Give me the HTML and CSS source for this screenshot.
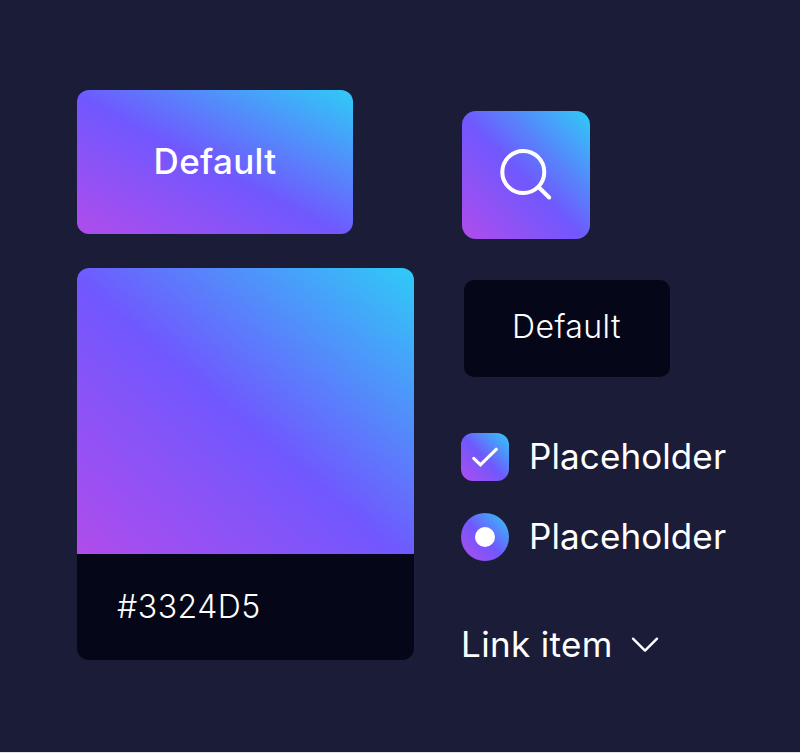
FILE: index.html
```html
<!DOCTYPE html>
<html lang="en">
<head>
<meta charset="utf-8">
<title>Components</title>
<link rel="stylesheet" href="styles.css">
</head>
<body>
<main class="board">
  <section class="column column-left">
    <button class="btn btn-primary"><span>Default</span></button>
    <article class="swatch">
      <div class="swatch-color"></div>
      <div class="swatch-label"><span>#3324D5</span></div>
    </article>
  </section>
  <section class="column column-right">
    <button class="btn-icon" aria-label="Search">
      <svg width="128" height="128" viewBox="0 0 128 128" fill="none" stroke="#fff" stroke-width="4" stroke-linecap="round"><circle cx="61.3" cy="61" r="21"/><path d="M76.5 76 87.2 86.5"/></svg>
    </button>
    <button class="btn btn-dark"><span>Default</span></button>
    <div class="option">
      <span class="checkbox"><svg width="48" height="48" viewBox="0 0 48 48" fill="none" stroke="#fff" stroke-width="3.2" stroke-linecap="round" stroke-linejoin="miter"><path d="M12.8 25.4 19.4 31.8 35.2 16.3"/></svg></span>
      <span class="option-label">Placeholder</span>
    </div>
    <div class="option">
      <span class="radio"></span>
      <span class="option-label">Placeholder</span>
    </div>
    <a class="link"><span class="link-label">Link item</span><svg width="28" height="18" viewBox="0 0 28 18" fill="none" stroke="#fff" stroke-width="2.4" stroke-linecap="round" stroke-linejoin="round"><path d="M2 2.7 14 14.6 26 2.7"/></svg></a>
  </section>
</main>
</body>
</html>
```
FILE: styles.css
```css
:root {
  --brand: linear-gradient(to top right, #b04cec 0%, #7058fe 48%, #2fcbf7 100%);
  --ink: #050617;
}
* { box-sizing: border-box; }
body {
  margin: 0;
  height: 753px;
  background: #1b1c37;
  border-bottom: 1px solid #e3e3ea;
  color: #fff;
  font-family: Inter, "Liberation Sans", sans-serif;
  overflow: hidden;
}
button { border: 0; padding: 0; color: inherit; font: inherit; display: block; }
span { white-space: nowrap; }
.board { display: flex; gap: 47px; padding-left: 77px; }
.column { display: flex; flex-direction: column; align-items: flex-start; }
.column-left { width: 337px; padding-top: 90.4px; gap: 33.6px; }
.column-right { width: 290px; padding-top: 111px; }
.btn { display: flex; align-items: center; justify-content: center; }
.btn-primary {
  width: 276px; height: 144px; padding-bottom: 2px; border-radius: 12px; background: var(--brand);
  font-size: 35px; font-weight: 500; letter-spacing: 0.3px;
}
.swatch { width: 337px; height: 392px; border-radius: 12px; overflow: hidden; background: var(--ink); }
.swatch-color { height: 286px; background: var(--brand); }
.swatch-label { height: 106px; padding: 0 0 0 40px; display: flex; align-items: center; font-size: 32px; font-weight: 300; letter-spacing: 0.5px; }
.btn-icon { width: 128px; height: 128px; margin-left: 1px; border-radius: 14px; background: var(--brand); }
.btn-icon svg, .option svg { display: block; }
.btn-dark {
  width: 206px; height: 97.4px; margin: 41px 0 55.6px 2.5px; padding-bottom: 4px;
  border-radius: 10px; background: var(--ink); font-size: 32px; font-weight: 300; letter-spacing: 0.4px;
}
.option { display: flex; align-items: center; height: 48px; margin-bottom: 32px; gap: 20px; }
.checkbox, .radio { width: 48px; height: 48px; flex: none; background: var(--brand); }
.checkbox { border-radius: 12px; }
.radio { border-radius: 50%; display: grid; place-items: center; }
.radio::after { content: ""; width: 20px; height: 20px; border-radius: 50%; background: #fff; }
.option-label, .link-label { font-size: 35px; font-weight: 400; letter-spacing: 0.1px; padding-bottom: 2px; }
.link-label { width: 151px; letter-spacing: 0.35px; }
.link { display: flex; align-items: center; height: 48px; margin-top: 28px; gap: 19px; }
```
